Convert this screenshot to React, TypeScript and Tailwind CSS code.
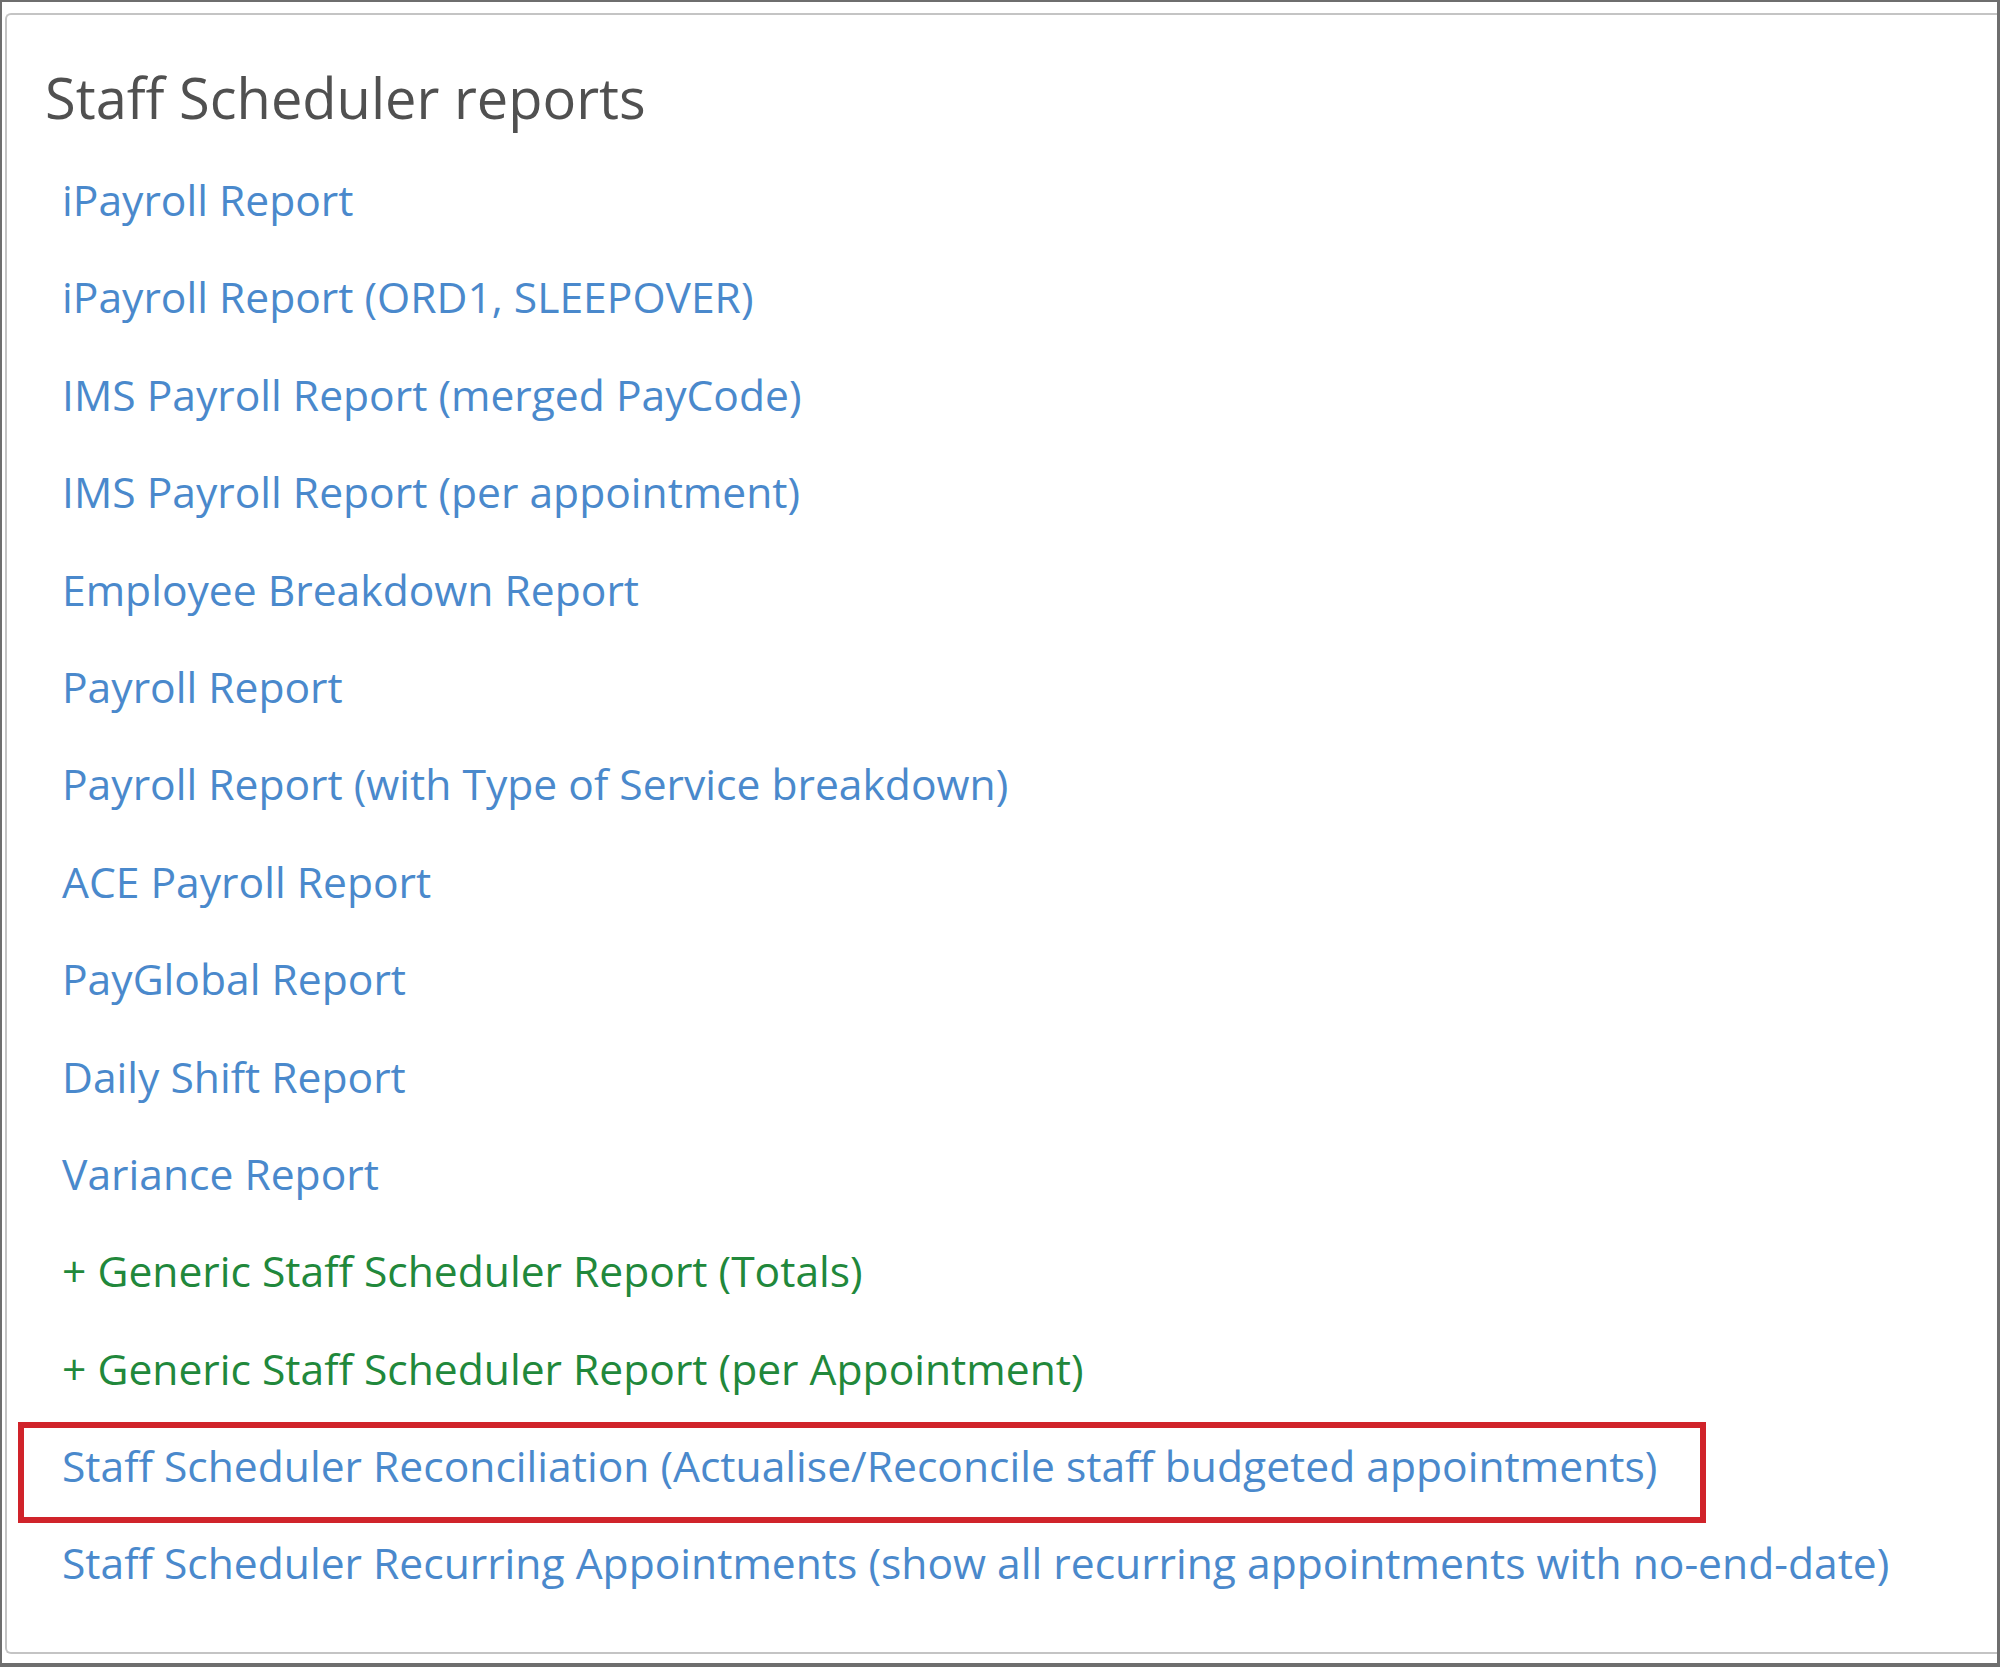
import React from "react";

type Item = { label: string; green?: boolean; boxed?: boolean };

const items: Item[] = [
  { label: "iPayroll Report" },
  { label: "iPayroll Report (ORD1, SLEEPOVER)" },
  { label: "IMS Payroll Report (merged PayCode)" },
  { label: "IMS Payroll Report (per appointment)" },
  { label: "Employee Breakdown Report" },
  { label: "Payroll Report" },
  { label: "Payroll Report (with Type of Service breakdown)" },
  { label: "ACE Payroll Report" },
  { label: "PayGlobal Report" },
  { label: "Daily Shift Report" },
  { label: "Variance Report" },
  { label: "+ Generic Staff Scheduler Report (Totals)", green: true },
  { label: "+ Generic Staff Scheduler Report (per Appointment)", green: true },
  {
    label:
      "Staff Scheduler Reconciliation (Actualise/Reconcile staff budgeted appointments)",
    boxed: true,
  },
  {
    label:
      "Staff Scheduler Recurring Appointments (show all recurring appointments with no-end-date)",
  },
];

export default function App() {
  return (
    <div
      className="w-[2000px] h-[1667px] bg-white border-t-2 border-l-2 border-r-[3px] border-b-[4px] border-[#6e6e6e] flex flex-col overflow-hidden"
      style={{ fontFamily: '"Open Sans", "Noto Sans", sans-serif' }}
    >
      <div className="mt-[11px] ml-[3px] h-[1641px] border-2 border-r-0 border-[#c4c4c4] rounded-l-[6px] flex flex-col">
        <h1 className="pt-[49px] pl-[38px] text-[56px] leading-[67px] font-normal text-[#505050]">
          Staff Scheduler reports
        </h1>
        <ul className="mt-[20px] flex flex-col">
          {items.map((it) => (
            <li key={it.label} className="relative h-[97.4px]">
              <a
                href="#"
                className={`block pl-[55px] text-[42.6px] leading-[97.4px] whitespace-nowrap ${
                  it.green ? "text-[#21883b]" : "text-[#4a89cc]"
                }`}
              >
                {it.label}
              </a>
              {it.boxed && (
                <div className="absolute left-[11px] top-[5px] w-[1688px] h-[101px] border-[6px] border-[#d0232a] pointer-events-none" />
              )}
            </li>
          ))}
        </ul>
      </div>
    </div>
  );
}
